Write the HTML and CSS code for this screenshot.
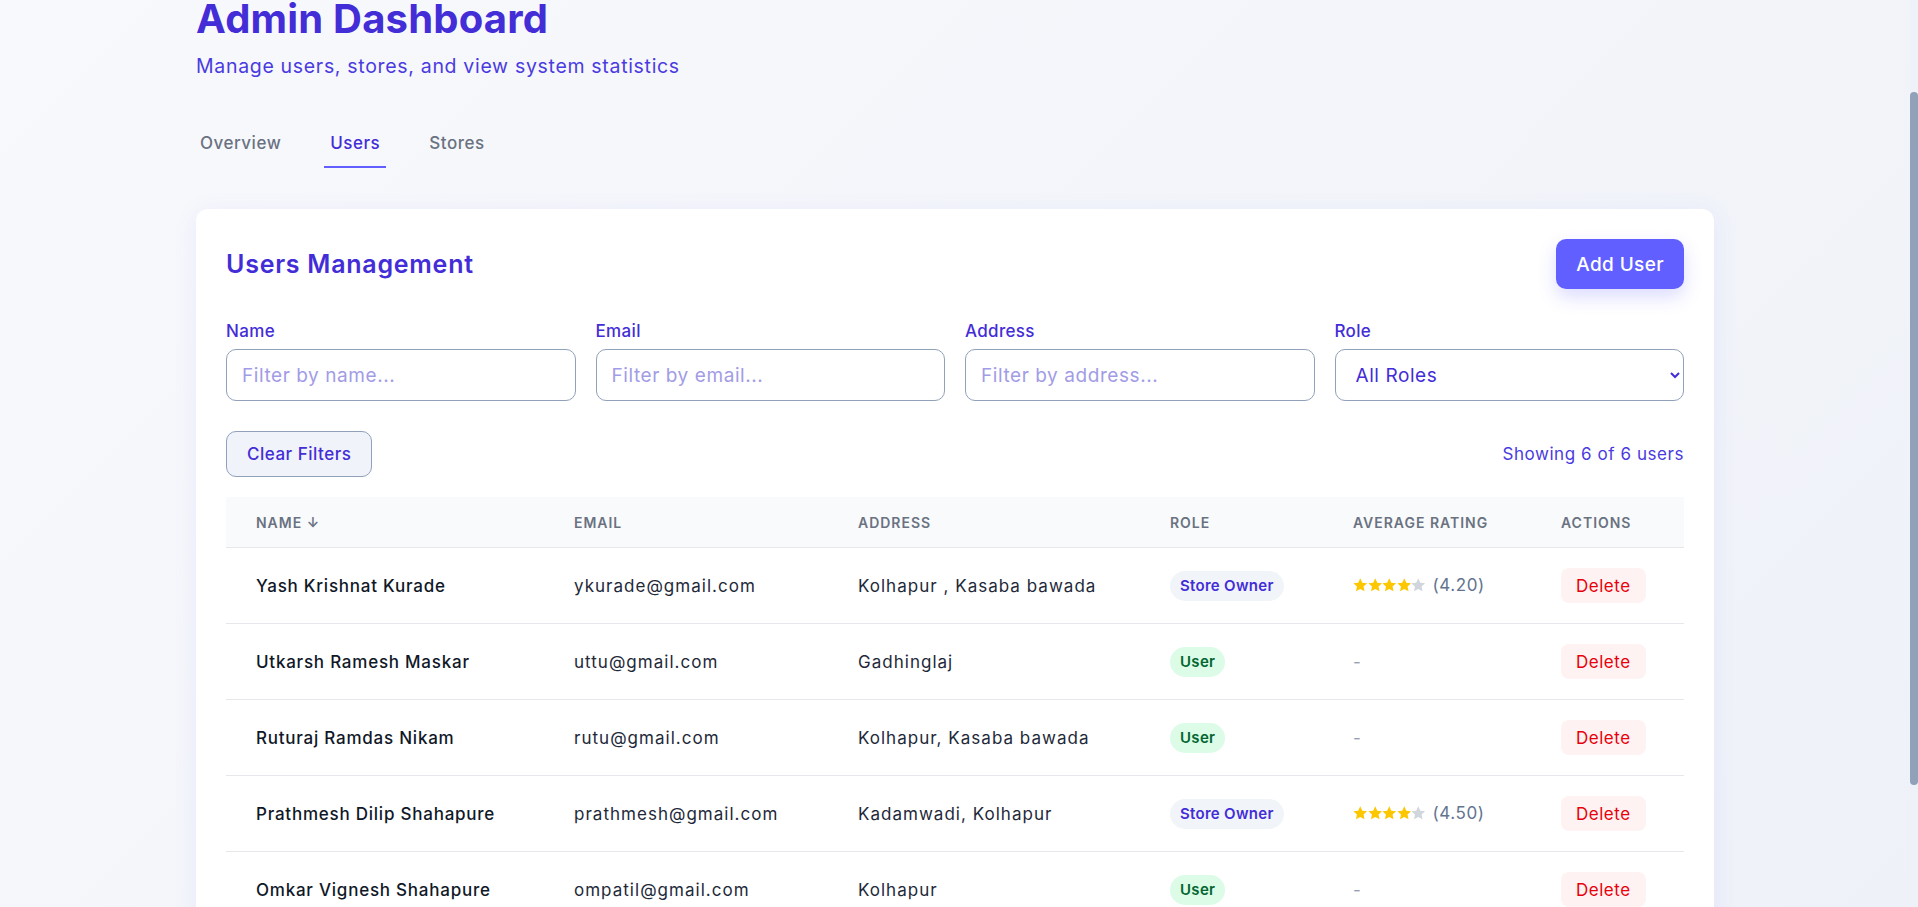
FILE: index.html
```html
<!DOCTYPE html>
<html lang="en">
<head>
<meta charset="utf-8">
<title>Admin Dashboard</title>
<link rel="stylesheet" href="styles.css">
</head>
<body>
<main class="page">
  <header class="page-header">
    <h1 class="page-title">Admin Dashboard</h1>
    <p class="page-subtitle">Manage users, stores, and view system statistics</p>
  </header>

  <nav class="tabs">
    <button class="tab">Overview</button>
    <button class="tab tab-active">Users</button>
    <button class="tab">Stores</button>
  </nav>

  <section class="card">
    <div class="card-head">
      <h2 class="card-title">Users Management</h2>
      <button class="btn-primary">Add User</button>
    </div>

    <div class="filters">
      <label class="field">
        <span class="field-label">Name</span>
        <input class="field-input" type="text" placeholder="Filter by name...">
      </label>
      <label class="field">
        <span class="field-label">Email</span>
        <input class="field-input" type="text" placeholder="Filter by email...">
      </label>
      <label class="field">
        <span class="field-label">Address</span>
        <input class="field-input" type="text" placeholder="Filter by address...">
      </label>
      <label class="field">
        <span class="field-label">Role</span>
        <select class="field-input field-select">
          <option>All Roles</option>
          <option>Admin</option>
          <option>User</option>
          <option>Store Owner</option>
        </select>
      </label>
    </div>

    <div class="toolbar">
      <button class="btn-secondary">Clear Filters</button>
      <span class="result-count">Showing 6 of 6 users</span>
    </div>

    <table class="users-table">
      <colgroup>
        <col class="col-name">
        <col class="col-email">
        <col class="col-address">
        <col class="col-role">
        <col class="col-rating">
        <col class="col-actions">
      </colgroup>
      <thead>
        <tr>
          <th>Name ↓</th>
          <th>Email</th>
          <th>Address</th>
          <th>Role</th>
          <th>Average Rating</th>
          <th>Actions</th>
        </tr>
      </thead>
      <tbody>
        <tr>
          <td class="cell-name">Yash Krishnat Kurade</td>
          <td>ykurade@gmail.com</td>
          <td>Kolhapur , Kasaba bawada</td>
          <td><span class="badge badge-owner">Store Owner</span></td>
          <td>
            <span class="rating">
              <span class="stars">
                <svg class="star star-on" viewBox="2 1.5 20 20"><path d="M12 2l2.9 6.26 6.9.74-5.1 4.68 1.4 6.82L12 17.3l-6.1 3.2 1.4-6.82L2.2 9l6.9-.74z"/></svg>
                <svg class="star star-on" viewBox="2 1.5 20 20"><path d="M12 2l2.9 6.26 6.9.74-5.1 4.68 1.4 6.82L12 17.3l-6.1 3.2 1.4-6.82L2.2 9l6.9-.74z"/></svg>
                <svg class="star star-on" viewBox="2 1.5 20 20"><path d="M12 2l2.9 6.26 6.9.74-5.1 4.68 1.4 6.82L12 17.3l-6.1 3.2 1.4-6.82L2.2 9l6.9-.74z"/></svg>
                <svg class="star star-on" viewBox="2 1.5 20 20"><path d="M12 2l2.9 6.26 6.9.74-5.1 4.68 1.4 6.82L12 17.3l-6.1 3.2 1.4-6.82L2.2 9l6.9-.74z"/></svg>
                <svg class="star star-off" viewBox="2 1.5 20 20"><path d="M12 2l2.9 6.26 6.9.74-5.1 4.68 1.4 6.82L12 17.3l-6.1 3.2 1.4-6.82L2.2 9l6.9-.74z"/></svg>
              </span>
              <span class="rating-value">(4.20)</span>
            </span>
          </td>
          <td><button class="btn-delete">Delete</button></td>
        </tr>
        <tr>
          <td class="cell-name">Utkarsh Ramesh Maskar</td>
          <td>uttu@gmail.com</td>
          <td>Gadhinglaj</td>
          <td><span class="badge badge-user">User</span></td>
          <td><span class="no-rating">-</span></td>
          <td><button class="btn-delete">Delete</button></td>
        </tr>
        <tr>
          <td class="cell-name">Ruturaj Ramdas Nikam</td>
          <td>rutu@gmail.com</td>
          <td>Kolhapur, Kasaba bawada</td>
          <td><span class="badge badge-user">User</span></td>
          <td><span class="no-rating">-</span></td>
          <td><button class="btn-delete">Delete</button></td>
        </tr>
        <tr>
          <td class="cell-name">Prathmesh Dilip Shahapure</td>
          <td>prathmesh@gmail.com</td>
          <td>Kadamwadi, Kolhapur</td>
          <td><span class="badge badge-owner">Store Owner</span></td>
          <td>
            <span class="rating">
              <span class="stars">
                <svg class="star star-on" viewBox="2 1.5 20 20"><path d="M12 2l2.9 6.26 6.9.74-5.1 4.68 1.4 6.82L12 17.3l-6.1 3.2 1.4-6.82L2.2 9l6.9-.74z"/></svg>
                <svg class="star star-on" viewBox="2 1.5 20 20"><path d="M12 2l2.9 6.26 6.9.74-5.1 4.68 1.4 6.82L12 17.3l-6.1 3.2 1.4-6.82L2.2 9l6.9-.74z"/></svg>
                <svg class="star star-on" viewBox="2 1.5 20 20"><path d="M12 2l2.9 6.26 6.9.74-5.1 4.68 1.4 6.82L12 17.3l-6.1 3.2 1.4-6.82L2.2 9l6.9-.74z"/></svg>
                <svg class="star star-on" viewBox="2 1.5 20 20"><path d="M12 2l2.9 6.26 6.9.74-5.1 4.68 1.4 6.82L12 17.3l-6.1 3.2 1.4-6.82L2.2 9l6.9-.74z"/></svg>
                <svg class="star star-off" viewBox="2 1.5 20 20"><path d="M12 2l2.9 6.26 6.9.74-5.1 4.68 1.4 6.82L12 17.3l-6.1 3.2 1.4-6.82L2.2 9l6.9-.74z"/></svg>
              </span>
              <span class="rating-value">(4.50)</span>
            </span>
          </td>
          <td><button class="btn-delete">Delete</button></td>
        </tr>
        <tr>
          <td class="cell-name">Omkar Vignesh Shahapure</td>
          <td>ompatil@gmail.com</td>
          <td>Kolhapur</td>
          <td><span class="badge badge-user">User</span></td>
          <td><span class="no-rating">-</span></td>
          <td><button class="btn-delete">Delete</button></td>
        </tr>
      </tbody>
    </table>
  </section>
</main>

<div class="scrollbar" aria-hidden="true"><div class="scrollbar-thumb"></div></div>
</body>
</html>
```

FILE: styles.css
```css
html {
  overflow: hidden;
  background: #f4f6fa;
}

body {
  margin: 0;
  padding-right: 8px;
  min-height: 100vh;
  font-family: Inter, "Noto Sans", "Liberation Sans", sans-serif;
  letter-spacing: 0.035em;
  color: #1e2939;
  background: linear-gradient(135deg, #f8f9fc 0%, #f3f5fa 50%, #eef1f8 100%);
}

.page {
  width: 1518px;
  margin: 0 auto;
  padding-bottom: 40px;
}

.page-title {
  margin: 0;
  font-size: 40px;
  line-height: 38px;
  font-weight: 700;
  letter-spacing: 0.005em;
  color: #432dd7;
}

.page-subtitle {
  margin: 14px 0 0;
  font-size: 19.5px;
  line-height: 28px;
  letter-spacing: 0.035em;
  color: #4a3be0;
}

.tabs {
  display: flex;
  gap: 37px;
  margin: 51px 0 0 -2px;
}

.tab {
  font-family: inherit;
  font-size: 17px;
  line-height: 24px;
  font-weight: 500;
  letter-spacing: 0.03em;
  padding: 0 6px 11px;
  border: 0;
  border-bottom: 2px solid transparent;
  background: none;
  color: #6a7282;
}

.tab-active {
  color: #432dd7;
  border-bottom-color: #615fff;
}

.card {
  margin-top: 41px;
  padding: 30px;
  background: #fff;
  border-radius: 12px;
  box-shadow: 0 4px 24px rgba(97, 95, 255, 0.09);
}

.card-head {
  display: flex;
  justify-content: space-between;
  align-items: center;
}

.card-title {
  margin: 0;
  font-size: 25px;
  line-height: 32px;
  font-weight: 600;
  letter-spacing: 0.03em;
  color: #432dd7;
}

.btn-primary {
  height: 50px;
  padding: 0 20px;
  border: 0;
  border-radius: 10px;
  background: #615fff;
  color: #fff;
  font-family: inherit;
  font-size: 19px;
  font-weight: 500;
  letter-spacing: 0.02em;
  box-shadow: 0 8px 18px rgba(97, 95, 255, 0.22);
}

.filters {
  display: grid;
  grid-template-columns: repeat(4, 1fr);
  gap: 20px;
  margin-top: 30px;
}

.field {
  display: flex;
  flex-direction: column;
  gap: 6px;
}

.field-label {
  font-size: 17px;
  line-height: 24px;
  font-weight: 500;
  letter-spacing: 0.02em;
  color: #432dd7;
}

.field-input {
  box-sizing: border-box;
  height: 52px;
  width: 100%;
  padding: 0 15px;
  border: 1px solid #90a1b9;
  border-radius: 10px;
  background: #fff;
  font-family: inherit;
  font-size: 19px;
  letter-spacing: 0.03em;
  color: #432dd7;
}

.field-input::placeholder {
  color: #a29ce6;
}

.field-select {
  padding: 0 10px 0 16px;
}

.toolbar {
  display: flex;
  justify-content: space-between;
  align-items: center;
  margin-top: 30px;
}

.btn-secondary {
  height: 46px;
  padding: 0 20px;
  border: 1px solid #90a1b9;
  border-radius: 10px;
  background: #f0f3f9;
  color: #432dd7;
  font-family: inherit;
  font-size: 17px;
  font-weight: 500;
  letter-spacing: 0.03em;
}

.result-count {
  font-size: 17px;
  color: #4a3be0;
}

.users-table {
  width: 100%;
  margin-top: 20px;
  border-collapse: collapse;
  table-layout: fixed;
}

.col-name { width: 318px; }
.col-email { width: 284px; }
.col-address { width: 312px; }
.col-role { width: 183px; }
.col-rating { width: 208px; }
.col-actions { width: 153px; }

.users-table th {
  height: 50px;
  padding: 0 0 0 30px;
  text-align: left;
  background: #f9fafb;
  border-bottom: 1px solid #e5e7eb;
  font-size: 14px;
  font-weight: 600;
  letter-spacing: 0.07em;
  text-transform: uppercase;
  color: #6a7282;
}

.users-table td {
  height: 75px;
  padding: 0 0 0 30px;
  border-bottom: 1px solid #e5e7eb;
  font-size: 17px;
  letter-spacing: 0.06em;
  color: #1e2939;
  vertical-align: middle;
  white-space: nowrap;
}

.users-table td.cell-name {
  font-weight: 500;
  letter-spacing: 0.045em;
  color: #101828;
}

.badge {
  display: inline-flex;
  align-items: center;
  height: 30px;
  padding: 0 10px;
  border-radius: 999px;
  font-size: 15px;
  font-weight: 600;
  letter-spacing: 0.02em;
}

.badge-owner {
  background: #f1f5f9;
  color: #432dd7;
}

.badge-user {
  background: #dcfce7;
  color: #016630;
}

.rating {
  display: inline-flex;
  align-items: center;
  gap: 7px;
}

.stars {
  display: inline-flex;
}

.star {
  width: 14.5px;
  height: 14px;
}

.star-on { fill: #fdc700; }
.star-off { fill: #d1d5dc; }

.rating-value {
  letter-spacing: 0.035em;
  color: #62748e;
}

.no-rating {
  color: #99a1af;
}

.btn-delete {
  height: 35px;
  padding: 0 15px;
  border: 0;
  border-radius: 8px;
  background: #fef2f2;
  color: #e7000b;
  font-family: inherit;
  font-size: 17px;
  letter-spacing: 0.03em;
}

.scrollbar {
  position: fixed;
  top: 0;
  right: 0;
  width: 8px;
  height: 100%;
  background: #eef1f7;
}

.scrollbar-thumb {
  margin-top: 92px;
  height: 693px;
  border-radius: 4px;
  background: #90a1b9;
}
```
